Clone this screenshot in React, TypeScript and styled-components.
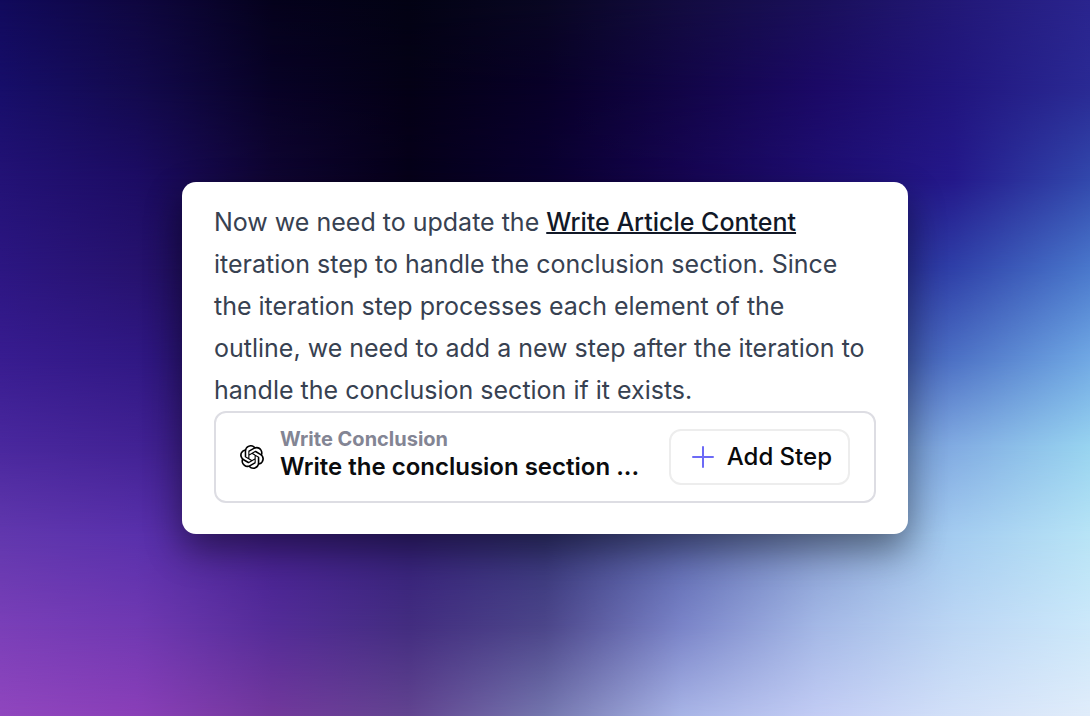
import React from "react";
import styled, { createGlobalStyle } from "styled-components";
import { SiOpenai } from "react-icons/si";

const GlobalStyle = createGlobalStyle`
  *, *::before, *::after { box-sizing: border-box; }
  body { margin: 0; font-family: Inter, "Liberation Sans", sans-serif; }
`;

/* Colour rows of the backdrop, top to bottom; each blends into the next one. */
const rows: string[][] = [
  ["#110a5c", "#0f0740", "#05021c", "#030314", "#090722", "#130c40", "#1a105a", "#221877", "#2a248e"],
  ["#170e6a", "#130a4e", "#080226", "#040116", "#080028", "#120547", "#1b0966", "#21157e", "#2a2a94"],
  ["#231276", "#1c0c64", "#0f0532", "#06001a", "#0a0030", "#160552", "#1e0e72", "#24188a", "#3248ac"],
  ["#2c1682", "#26126e", "#12063c", "#080020", "#0c002c", "#160648", "#20147c", "#2f40a8", "#4a78cc"],
  ["#381c90", "#301884", "#1c0a50", "#100630", "#12052e", "#1a0f50", "#2e3690", "#4c70c4", "#70a8e4"],
  ["#4a289e", "#422294", "#2e1470", "#201050", "#221850", "#343478", "#5c78b8", "#82ace2", "#98d4f0"],
  ["#6238ae", "#5a31ac", "#442090", "#34207a", "#343478", "#5a66ac", "#849cd0", "#a4ccf0", "#b8e4f6"],
  ["#7a3fb8", "#7039b2", "#542c98", "#432d80", "#4c468a", "#7a84c8", "#a4b8e6", "#bcd6f4", "#cce8fa"],
  ["#9046be", "#8a3fb8", "#72389c", "#624490", "#7476ae", "#a8b4e6", "#c2ccf4", "#d2e0f8", "#e0ecfa"],
];

const Page = styled.main`
  position: relative;
  isolation: isolate;
  display: grid;
  grid-template-columns: minmax(0, 726px);
  justify-content: center;
  align-content: center;
  min-height: 100vh;
  padding: 24px;
`;

const Backdrop = styled.div`
  position: absolute;
  inset: 0;
  z-index: -1;
  overflow: hidden;
`;

const ColorRow = styled.div<{ $index: number }>`
  position: absolute;
  inset: 0;
  background: linear-gradient(to right, ${(p) => rows[p.$index].join(", ")});
  ${(p) =>
    p.$index > 0 &&
    `mask-image: linear-gradient(to bottom, transparent ${(p.$index - 1) * 12.5}%, #000 ${p.$index * 12.5}%);`}
`;

const Card = styled.article`
  padding: 19px 32px 31px;
  border-radius: 14px;
  background: #fff;
  box-shadow: 0 16px 36px rgba(0, 0, 0, 0.44);
`;

const Message = styled.p`
  margin: 0;
  color: #374151;
  font-size: 25px;
  line-height: 42px;
`;

const StepLink = styled.a`
  color: #111827;
  font-weight: 500;
  text-decoration: underline;
  text-decoration-thickness: 2px;
`;

const StepBox = styled.section`
  display: flex;
  align-items: center;
  height: 92px;
  padding: 0 24px;
  border: 2px solid #dddde3;
  border-radius: 12px;
`;

const StepText = styled.div`
  flex: 1;
  min-width: 0;
  margin: 0 28px 0 16px;
  padding-bottom: 8px;
`;

const StepName = styled.div`
  color: #838594;
  font-size: 20px;
  font-weight: 700;
  line-height: 28px;
`;

const StepTitle = styled.div`
  overflow: hidden;
  color: #0b0c0e;
  font-size: 24px;
  font-weight: 600;
  line-height: 28px;
  text-overflow: ellipsis;
  white-space: nowrap;
`;

const AddButton = styled.button`
  display: flex;
  flex: none;
  align-items: center;
  gap: 12px;
  height: 56px;
  padding: 0 16px 0 20px;
  border: 2px solid #ededed;
  border-radius: 12px;
  background: #fff;
  color: #09090b;
  font: 500 24px/32px Inter, "Liberation Sans", sans-serif;
`;

export default function App() {
  return (
    <>
      <GlobalStyle />
      <Page>
        <Backdrop aria-hidden="true">
          {rows.map((_, i) => (
            <ColorRow key={i} $index={i} />
          ))}
        </Backdrop>
        <Card>
          <Message>
            Now we need to update the <StepLink href="#write-article-content">Write Article Content</StepLink>{" "}
            iteration step to handle the conclusion section. Since the iteration step processes each
            element of the outline, we need to add a new step after the iteration to handle the
            conclusion section if it exists.
          </Message>
          <StepBox>
            <SiOpenai size={24} color="#000" aria-hidden="true" />
            <StepText>
              <StepName>Write Conclusion</StepName>
              <StepTitle>Write the conclusion section ...</StepTitle>
            </StepText>
            <AddButton type="button">
              <svg width="24" height="24" viewBox="0 0 24 24" fill="none" stroke="#6c6af6" strokeWidth="2" strokeLinecap="round" aria-hidden="true">
                <path d="M12 2v20M2 12h20" />
              </svg>
              Add Step
            </AddButton>
          </StepBox>
        </Card>
      </Page>
    </>
  );
}
